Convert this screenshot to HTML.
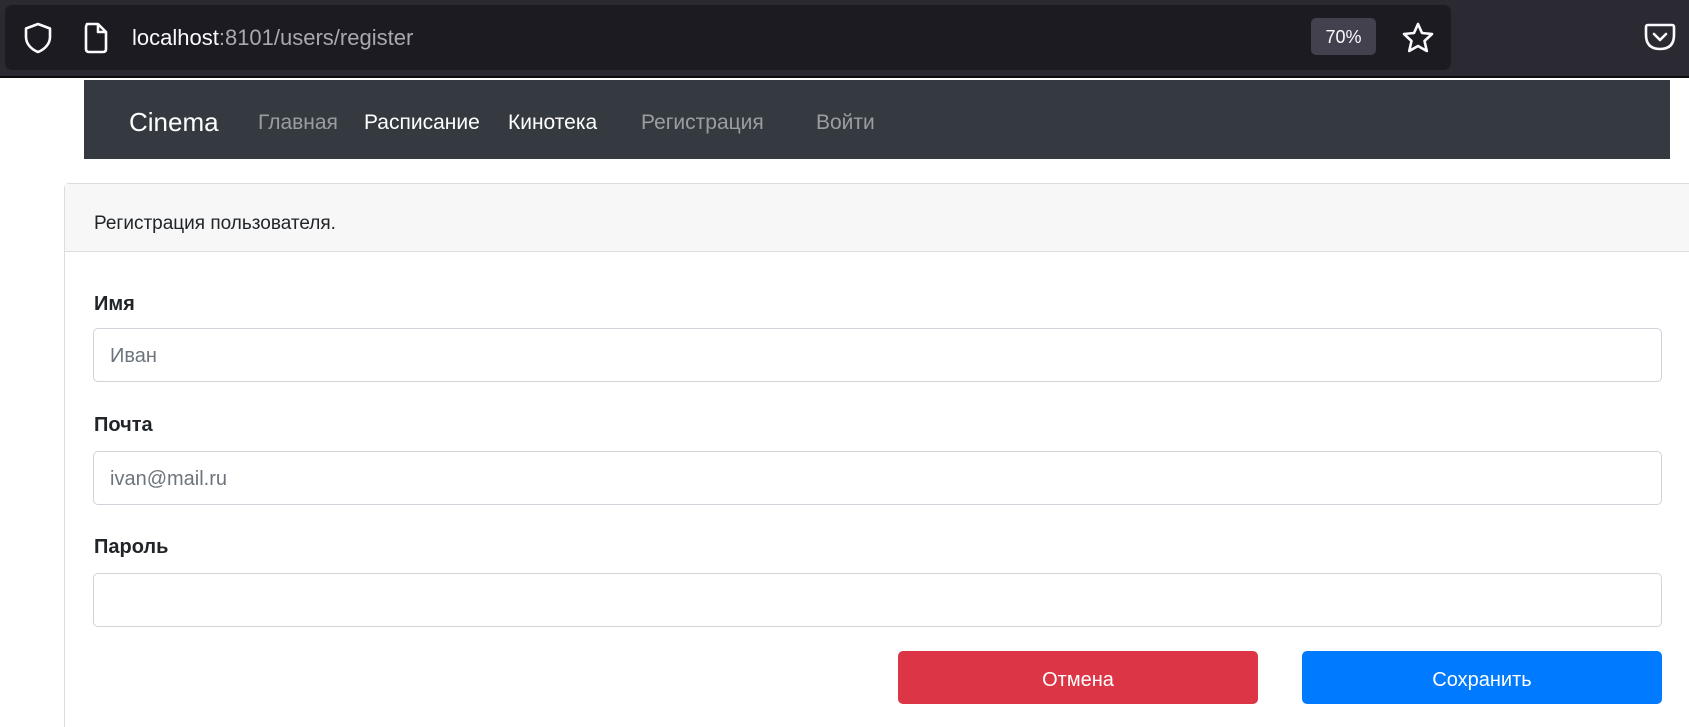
<!DOCTYPE html>
<html style="width:1689px;height:727px;overflow:hidden"><head><meta charset="utf-8"><style>
*{box-sizing:border-box;margin:0;padding:0}
body{width:1689px;height:727px;overflow:hidden;background:#fff;font-family:"Liberation Sans","DejaVu Sans",sans-serif;position:relative}
.abs{position:absolute}
.tb{left:0;top:0;width:1689px;height:78px;background:#2b2a33;border-bottom:2px solid #0c0c0d}
.url{left:5px;top:5px;width:1446px;height:65px;background:#1c1b22;border-radius:7px}
.nav{left:84px;top:80px;width:1586px;height:79px;background:#343a40}
.nav span{position:absolute;top:31px;font-size:21px;color:rgba(255,255,255,.5)}
.card{left:64px;top:183px;width:1625px;height:544px;border:1px solid #dcdcdc;border-bottom:none;border-right:none;border-radius:5px 0 0 0}
.hdr{left:65px;top:184px;width:1624px;height:68px;background:#f7f7f7;border-bottom:1px solid #dcdcdc}
.lbl{left:94px;font-size:20px;font-weight:bold;color:#212529}
.inp{left:93px;width:1569px;height:54px;border:1px solid #ced4da;border-radius:5px;font-size:20px;color:#6c757d;padding:16px 0 0 16px}
.btn{top:651px;height:53px;width:360px;border-radius:5px;color:#fff;font-size:20px;text-align:center;line-height:58px}
</style></head><body>
<div class="abs tb"></div>
<div class="abs url"></div>
<svg class="abs" style="left:22px;top:21px" width="32" height="34" viewBox="0 0 32 34"><path d="M16 3 L28 7.5 V16 C28 23 22.5 28.5 16 31 C9.5 28.5 4 23 4 16 V7.5 Z" fill="none" stroke="#fbfbfe" stroke-width="2.6" stroke-linejoin="round"/></svg>
<svg class="abs" style="left:83px;top:22px" width="26" height="32" viewBox="0 0 26 32"><path d="M4 2 H15 L23 10 V27 Q23 30 20 30 H6 Q3 30 3 27 V5 Q3 2 6 2 Z M15 2 V10 H23" fill="none" stroke="#fbfbfe" stroke-width="2.6" stroke-linejoin="round"/></svg>
<div class="abs" style="left:132px;top:25px;font-size:22px;color:#fbfbfe">localhost<span style="color:#a8a8b0">:8101/users/register</span></div>
<div class="abs" style="left:1311px;top:18px;width:65px;height:37px;background:#42414d;border-radius:5px;color:#fbfbfe;font-size:18px;text-align:center;line-height:38px">70%</div>
<svg class="abs" style="left:1400px;top:20px" width="36" height="36" viewBox="0 0 36 36"><path d="M18 4 L22 13 L32 14 L24.5 21 L26.8 31 L18 26 L9.2 31 L11.5 21 L4 14 L14 13 Z" fill="none" stroke="#fbfbfe" stroke-width="2.6" stroke-linejoin="round"/></svg>
<svg class="abs" style="left:1644px;top:22px" width="32" height="30" viewBox="0 0 32 30"><path d="M4 3 H28 Q30 3 30 5 V13 Q30 27 16 27 Q2 27 2 13 V5 Q2 3 4 3 Z" fill="none" stroke="#fbfbfe" stroke-width="2.6"/><path d="M10 12 L16 18 L22 12" fill="none" stroke="#fbfbfe" stroke-width="2.6" stroke-linecap="round" stroke-linejoin="round"/></svg>
<div class="abs nav">
<span style="left:45px;top:27px;font-size:26px;color:#fff">Cinema</span>
<span style="left:174px">Главная</span>
<span style="left:280px;color:#fff">Расписание</span>
<span style="left:424px;color:#fff">Кинотека</span>
<span style="left:557px">Регистрация</span>
<span style="left:732px">Войти</span>
</div>
<div class="abs card"></div>
<div class="abs hdr"></div>
<div class="abs" style="left:94px;top:213px;font-size:19px;color:#212529">Регистрация пользователя.</div>
<div class="abs lbl" style="top:293px">Имя</div>
<div class="abs inp" style="top:328px">Иван</div>
<div class="abs lbl" style="top:414px">Почта</div>
<div class="abs inp" style="top:451px">ivan@mail.ru</div>
<div class="abs lbl" style="top:536px">Пароль</div>
<div class="abs inp" style="top:573px"></div>
<div class="abs btn" style="left:898px;background:#dc3545">Отмена</div>
<div class="abs btn" style="left:1302px;background:#007bff">Сохранить</div>
</body></html>
